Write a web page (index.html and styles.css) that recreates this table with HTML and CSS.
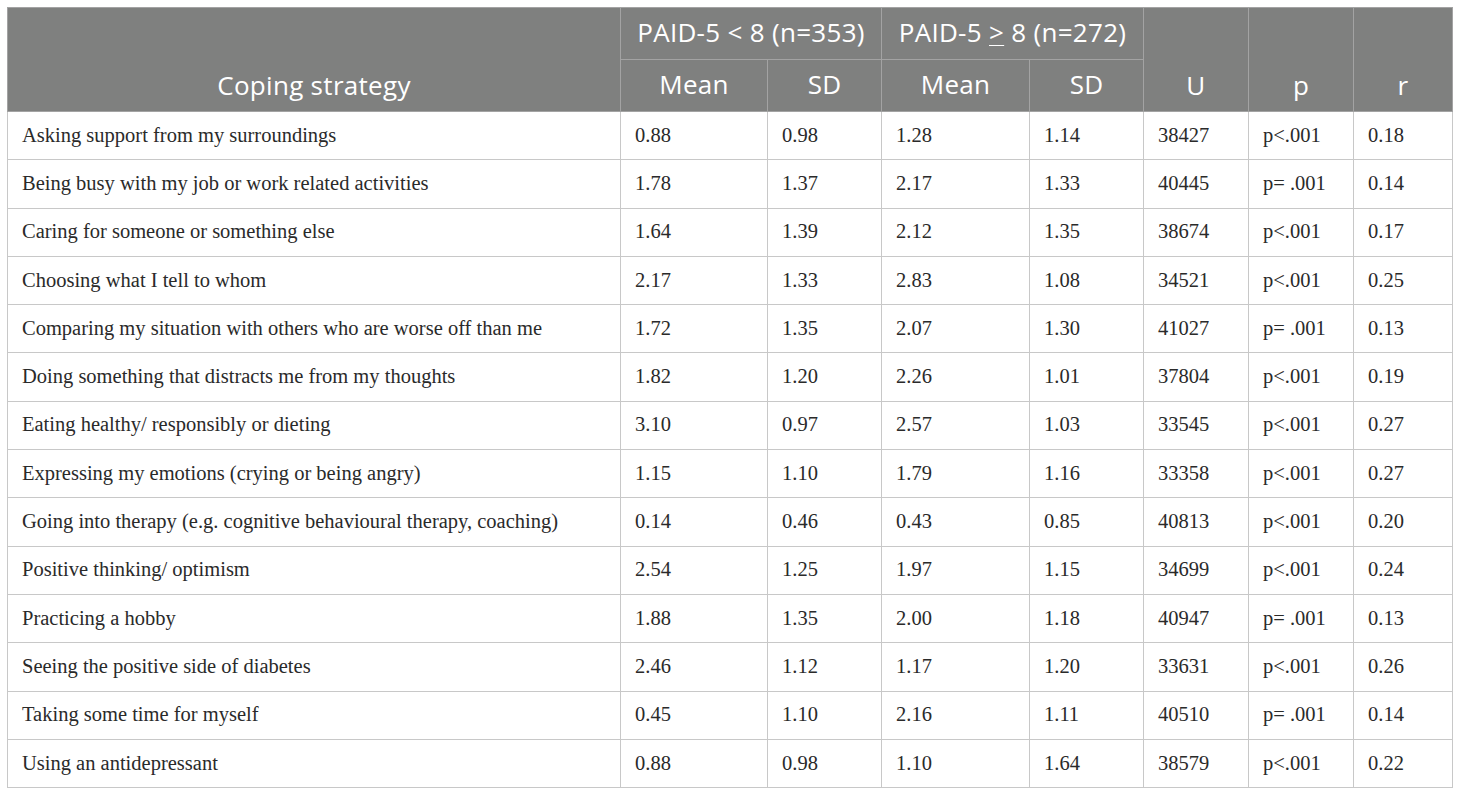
FILE: index.html
```html
<!DOCTYPE html>
<html>
<head>
<meta charset="utf-8">
<link rel="stylesheet" href="styles.css">
</head>
<body>
<table class="data">
<colgroup>
<col class="c-strat"><col class="c-m1"><col class="c-s1"><col class="c-m2"><col class="c-s2"><col class="c-u"><col class="c-p"><col class="c-r">
</colgroup>
<thead>
<tr class="h1">
<th rowspan="2" class="bottom">Coping strategy</th>
<th colspan="2">PAID-5 &lt; 8 (n=353)</th>
<th colspan="2">PAID-5 <u>&gt;</u> 8 (n=272)</th>
<th rowspan="2" class="bottom">U</th>
<th rowspan="2" class="bottom">p</th>
<th rowspan="2" class="bottom">r</th>
</tr>
<tr class="h2">
<th>Mean</th><th>SD</th><th>Mean</th><th>SD</th>
</tr>
</thead>
<tbody>
<tr><td>Asking support from my surroundings</td><td>0.88</td><td>0.98</td><td>1.28</td><td>1.14</td><td>38427</td><td>p&lt;.001</td><td>0.18</td></tr>
<tr><td>Being busy with my job or work related activities</td><td>1.78</td><td>1.37</td><td>2.17</td><td>1.33</td><td>40445</td><td>p= .001</td><td>0.14</td></tr>
<tr><td>Caring for someone or something else</td><td>1.64</td><td>1.39</td><td>2.12</td><td>1.35</td><td>38674</td><td>p&lt;.001</td><td>0.17</td></tr>
<tr><td>Choosing what I tell to whom</td><td>2.17</td><td>1.33</td><td>2.83</td><td>1.08</td><td>34521</td><td>p&lt;.001</td><td>0.25</td></tr>
<tr><td>Comparing my situation with others who are worse off than me</td><td>1.72</td><td>1.35</td><td>2.07</td><td>1.30</td><td>41027</td><td>p= .001</td><td>0.13</td></tr>
<tr><td>Doing something that distracts me from my thoughts</td><td>1.82</td><td>1.20</td><td>2.26</td><td>1.01</td><td>37804</td><td>p&lt;.001</td><td>0.19</td></tr>
<tr><td>Eating healthy/ responsibly or dieting</td><td>3.10</td><td>0.97</td><td>2.57</td><td>1.03</td><td>33545</td><td>p&lt;.001</td><td>0.27</td></tr>
<tr><td>Expressing my emotions (crying or being angry)</td><td>1.15</td><td>1.10</td><td>1.79</td><td>1.16</td><td>33358</td><td>p&lt;.001</td><td>0.27</td></tr>
<tr><td>Going into therapy (e.g. cognitive behavioural therapy, coaching)</td><td>0.14</td><td>0.46</td><td>0.43</td><td>0.85</td><td>40813</td><td>p&lt;.001</td><td>0.20</td></tr>
<tr><td>Positive thinking/ optimism</td><td>2.54</td><td>1.25</td><td>1.97</td><td>1.15</td><td>34699</td><td>p&lt;.001</td><td>0.24</td></tr>
<tr><td>Practicing a hobby</td><td>1.88</td><td>1.35</td><td>2.00</td><td>1.18</td><td>40947</td><td>p= .001</td><td>0.13</td></tr>
<tr><td>Seeing the positive side of diabetes</td><td>2.46</td><td>1.12</td><td>1.17</td><td>1.20</td><td>33631</td><td>p&lt;.001</td><td>0.26</td></tr>
<tr><td>Taking some time for myself</td><td>0.45</td><td>1.10</td><td>2.16</td><td>1.11</td><td>40510</td><td>p= .001</td><td>0.14</td></tr>
<tr><td>Using an antidepressant</td><td>0.88</td><td>0.98</td><td>1.10</td><td>1.64</td><td>38579</td><td>p&lt;.001</td><td>0.22</td></tr>
</tbody>
</table>
</body>
</html>
```
FILE: styles.css
```css
html, body {
  margin: 0;
  padding: 0;
  background: #ffffff;
}
body {
  padding: 7px 0 0 7px;
}
.data {
  border-collapse: collapse;
  table-layout: fixed;
  width: 1445px;
  border: 1px solid #c4c4c4;
}
.c-strat { width: 613px; }
.c-m1 { width: 147px; }
.c-s1 { width: 114px; }
.c-m2 { width: 148px; }
.c-s2 { width: 114px; }
.c-u { width: 105px; }
.c-p { width: 105px; }
.c-r { width: 99px; }
.data .h1,
.data .h2 {
  height: 52px;
}
.data tbody tr {
  height: 48.3px;
}
.data th {
  background: #7f807f;
  color: #ffffff;
  font-family: "Open Sans", "Noto Sans", sans-serif;
  font-weight: 400;
  font-size: 26px;
  line-height: 30px;
  letter-spacing: 0.3px;
  text-align: center;
  padding: 0 4px;
  border: 1px solid #a3a3a3;
  white-space: nowrap;
}
.data .h1 th {
  padding-bottom: 3px;
}
.data .h2 th {
  padding-bottom: 4px;
}
.data th.bottom {
  vertical-align: bottom;
  padding-bottom: 11px;
}
.data th u {
  text-decoration-thickness: 1px;
  text-underline-offset: 3px;
}
.data td {
  font-family: "Liberation Serif", "Times New Roman", serif;
  font-size: 20.5px;
  line-height: 24px;
  color: #2a2a2a;
  padding: 0 14px 2px;
  border: 1px solid #c8c8c8;
  white-space: nowrap;
}
```
